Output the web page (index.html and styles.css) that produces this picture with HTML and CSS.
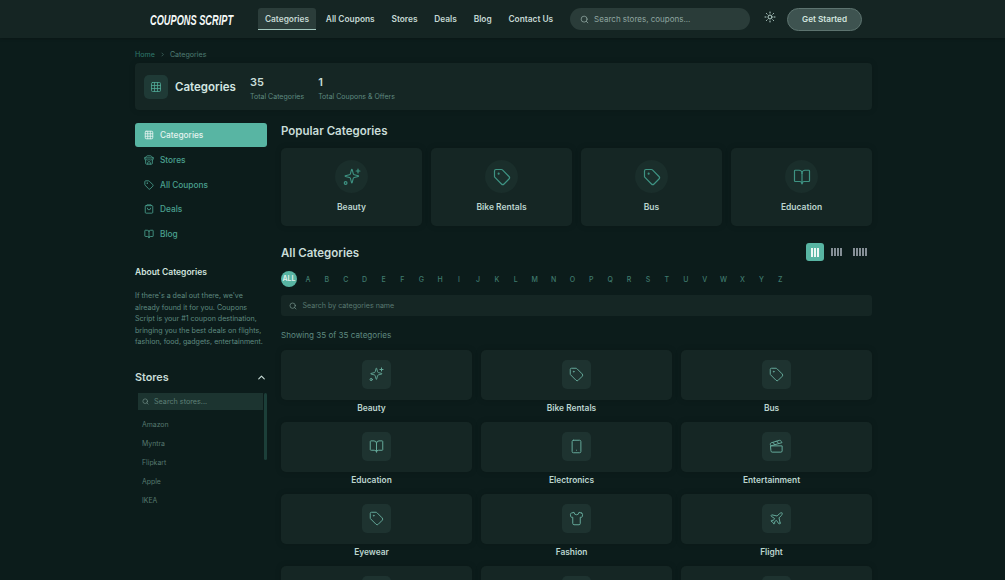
FILE: index.html
```html
<!DOCTYPE html>
<html lang="en">

<head>
    <meta charset="UTF-8">
    <meta name="viewport" content="width=device-width, initial-scale=1.0">
    <title>Categories - Coupons Script</title>
    <link rel="stylesheet" href="styles.css">
</head>

<body>
    <svg class="icon-defs" aria-hidden="true">
        <symbol id="i-grid" viewBox="0 0 24 24"><rect x="3" y="3" width="18" height="18" rx="2"/><path d="M3 9h18M3 15h18M9 3v18M15 3v18"/></symbol>
        <symbol id="i-store" viewBox="0 0 24 24"><path d="m2 7 4.41-4.41A2 2 0 0 1 7.83 2h8.34a2 2 0 0 1 1.42.59L22 7"/><path d="M4 12v8a2 2 0 0 0 2 2h12a2 2 0 0 0 2-2v-8"/><path d="M15 22v-4a2 2 0 0 0-2-2h-2a2 2 0 0 0-2 2v4"/><path d="M2 7h20"/><path d="M22 7v3a2 2 0 0 1-2 2 2.7 2.7 0 0 1-1.59-.63.7.7 0 0 0-.82 0A2.7 2.7 0 0 1 16 12a2.7 2.7 0 0 1-1.59-.63.7.7 0 0 0-.82 0A2.7 2.7 0 0 1 12 12a2.7 2.7 0 0 1-1.59-.63.7.7 0 0 0-.82 0A2.7 2.7 0 0 1 8 12a2.7 2.7 0 0 1-1.59-.63.7.7 0 0 0-.82 0A2.7 2.7 0 0 1 4 12a2 2 0 0 1-2-2V7"/></symbol>
        <symbol id="i-tag" viewBox="0 0 24 24"><path d="M12.586 2.586A2 2 0 0 0 11.172 2H4a2 2 0 0 0-2 2v7.172a2 2 0 0 0 .586 1.414l8.704 8.704a2.426 2.426 0 0 0 3.42 0l6.58-6.58a2.426 2.426 0 0 0 0-3.42z"/><circle cx="7.5" cy="7.5" r=".6"/></symbol>
        <symbol id="i-bag" viewBox="0 0 24 24"><rect x="3" y="4" width="18" height="18" rx="2"/><path d="M6 4l1-2h10l1 2"/><path d="M8 10a4 4 0 0 0 8 0"/></symbol>
        <symbol id="i-book" viewBox="0 0 24 24"><path d="M12 7v14"/><path d="M3 18a1 1 0 0 1-1-1V4a1 1 0 0 1 1-1h5a4 4 0 0 1 4 4 4 4 0 0 1 4-4h5a1 1 0 0 1 1 1v13a1 1 0 0 1-1 1h-6a3 3 0 0 0-3 3 3 3 0 0 0-3-3z"/></symbol>
        <symbol id="i-spark" viewBox="0 0 24 24"><path d="M9.937 15.5A2 2 0 0 0 8.5 14.063l-6.135-1.582a.5.5 0 0 1 0-.962L8.5 9.936A2 2 0 0 0 9.937 8.5l1.582-6.135a.5.5 0 0 1 .963 0L14.063 8.5A2 2 0 0 0 15.5 9.937l6.135 1.581a.5.5 0 0 1 0 .964L15.5 14.063a2 2 0 0 0-1.437 1.437l-1.582 6.135a.5.5 0 0 1-.963 0z" transform="translate(1 0) scale(.9)"/><path d="M20 1.5v5M22.5 4h-5"/><circle cx="3.5" cy="20" r="1.8"/></symbol>
        <symbol id="i-tablet" viewBox="0 0 24 24"><rect x="5" y="2" width="14" height="20" rx="2"/><path d="M12 18h.01"/></symbol>
        <symbol id="i-clap" viewBox="0 0 24 24"><path d="M20.2 6 3 11l-.9-2.4c-.3-1.1.3-2.2 1.3-2.5l13.5-4c1.1-.3 2.2.3 2.5 1.3Z"/><path d="m6.2 5.3 3.1 3.9M12.4 3.4l3.1 4"/><path d="M3 11h18v8a2 2 0 0 1-2 2H5a2 2 0 0 1-2-2Z"/></symbol>
        <symbol id="i-shirt" viewBox="0 0 24 24"><path d="M20.38 3.46 16 2a4 4 0 0 1-8 0L3.62 3.46a2 2 0 0 0-1.34 2.23l.58 3.47a1 1 0 0 0 .99.84H6v10c0 1.1.9 2 2 2h8a2 2 0 0 0 2-2V10h2.15a1 1 0 0 0 .99-.84l.58-3.47a2 2 0 0 0-1.34-2.23z"/></symbol>
        <symbol id="i-plane" viewBox="0 0 24 24"><path d="M17.8 19.2 16 11l3.5-3.5C21 6 21.5 4 21 3c-1-.5-3 0-4.5 1.5L13 8 4.8 6.2c-.5-.1-.9.1-1.1.5l-.3.5c-.2.5-.1 1 .3 1.3L9 12l-2 3H4l-1 1 3 2 2 3 1-1v-3l3-2 3.5 5.3c.3.4.8.5 1.3.3l.5-.2c.4-.3.6-.7.5-1.2z"/></symbol>
        <symbol id="i-search" viewBox="0 0 24 24"><circle cx="11" cy="11" r="8"/><path d="m21 21-4.3-4.3"/></symbol>
    </svg>

    <header class="site-header">
        <div class="logo-box"><a class="logo">COUPONS SCRIPT</a></div>
        <nav class="main-nav">
            <a class="active">Categories</a>
            <a>All Coupons</a>
            <a>Stores</a>
            <a>Deals</a>
            <a>Blog</a>
            <a>Contact Us</a>
        </nav>
        <div class="header-search">
            <svg class="ico"><use href="#i-search"/></svg>
            <span>Search stores, coupons...</span>
        </div>
        <svg class="sun" viewBox="0 0 24 24"><circle cx="12" cy="12" r="4"/><path d="M12 2v2M12 20v2M4.93 4.93l1.41 1.41M17.66 17.66l1.41 1.41M2 12h2M20 12h2M6.34 17.66l-1.41 1.41M19.07 4.93l-1.41 1.41"/></svg>
        <button class="btn-start">Get Started</button>
    </header>

    <div class="page">
        <div class="breadcrumb">
            <span>Home</span>
            <svg class="crumb-sep" viewBox="0 0 24 24"><path d="m9 18 6-6-6-6"/></svg>
            <span class="current">Categories</span>
        </div>

        <section class="hero">
            <div class="hero-icon"><svg class="ico"><use href="#i-grid"/></svg></div>
            <h1>Categories</h1>
            <div class="stat"><strong>35</strong><span>Total Categories</span></div>
            <div class="stat"><strong>1</strong><span>Total Coupons &amp; Offers</span></div>
        </section>

        <div class="columns">
            <aside class="sidebar">
                <ul class="side-menu">
                    <li class="active"><svg class="ico"><use href="#i-grid"/></svg>Categories</li>
                    <li><svg class="ico"><use href="#i-store"/></svg>Stores</li>
                    <li><svg class="ico"><use href="#i-tag"/></svg>All Coupons</li>
                    <li><svg class="ico"><use href="#i-bag"/></svg>Deals</li>
                    <li><svg class="ico"><use href="#i-book"/></svg>Blog</li>
                </ul>

                <h4 class="about-title">About Categories</h4>
                <p class="about-text">If there's a deal out there, we've already found it for you. Coupons Script is your #1 coupon destination, bringing you the best deals on flights, fashion, food, gadgets, entertainment.</p>

                <div class="stores-head">
                    <h3>Stores</h3>
                    <svg class="chev" viewBox="0 0 24 24"><path d="m18 15-6-6-6 6"/></svg>
                </div>
                <div class="stores-box">
                    <div class="stores-scroll"></div>
                    <div class="stores-search">
                        <svg class="ico"><use href="#i-search"/></svg>
                        <span>Search stores...</span>
                    </div>
                    <ul class="stores-list">
                        <li>Amazon</li>
                        <li>Myntra</li>
                        <li>Flipkart</li>
                        <li>Apple</li>
                        <li>IKEA</li>
                    </ul>
                </div>
            </aside>

            <main class="content">
                <h2 class="popular-title">Popular Categories</h2>
                <div class="popular-grid">
                    <div class="pop-card"><div class="pop-icon"><svg class="ico"><use href="#i-spark"/></svg></div><span>Beauty</span></div>
                    <div class="pop-card"><div class="pop-icon"><svg class="ico"><use href="#i-tag"/></svg></div><span>Bike Rentals</span></div>
                    <div class="pop-card"><div class="pop-icon"><svg class="ico"><use href="#i-tag"/></svg></div><span>Bus</span></div>
                    <div class="pop-card"><div class="pop-icon"><svg class="ico"><use href="#i-book"/></svg></div><span>Education</span></div>
                </div>

                <div class="all-head">
                    <h2>All Categories</h2>
                    <div class="view-toggle">
                        <button class="view-btn active"><i></i><i></i><i></i></button>
                        <button class="view-btn"><i></i><i></i><i></i><i></i></button>
                        <button class="view-btn"><i></i><i></i><i></i><i></i><i></i></button>
                    </div>
                </div>

                <div class="alpha">
                    <span class="active">ALL</span><span>A</span><span>B</span><span>C</span><span>D</span><span>E</span><span>F</span><span>G</span><span>H</span><span>I</span><span>J</span><span>K</span><span>L</span><span>M</span><span>N</span><span>O</span><span>P</span><span>Q</span><span>R</span><span>S</span><span>T</span><span>U</span><span>V</span><span>W</span><span>X</span><span>Y</span><span>Z</span>
                </div>

                <div class="cat-search">
                    <svg class="ico"><use href="#i-search"/></svg>
                    <span>Search by categories name</span>
                </div>

                <p class="showing">Showing 35 of 35 categories</p>

                <div class="cat-grid">
                    <div class="cat-item"><div class="cat-card"><div class="cat-icon"><svg class="ico"><use href="#i-spark"/></svg></div></div><span>Beauty</span></div>
                    <div class="cat-item"><div class="cat-card"><div class="cat-icon"><svg class="ico"><use href="#i-tag"/></svg></div></div><span>Bike Rentals</span></div>
                    <div class="cat-item"><div class="cat-card"><div class="cat-icon"><svg class="ico"><use href="#i-tag"/></svg></div></div><span>Bus</span></div>
                    <div class="cat-item"><div class="cat-card"><div class="cat-icon"><svg class="ico"><use href="#i-book"/></svg></div></div><span>Education</span></div>
                    <div class="cat-item"><div class="cat-card"><div class="cat-icon"><svg class="ico"><use href="#i-tablet"/></svg></div></div><span>Electronics</span></div>
                    <div class="cat-item"><div class="cat-card"><div class="cat-icon"><svg class="ico"><use href="#i-clap"/></svg></div></div><span>Entertainment</span></div>
                    <div class="cat-item"><div class="cat-card"><div class="cat-icon"><svg class="ico"><use href="#i-tag"/></svg></div></div><span>Eyewear</span></div>
                    <div class="cat-item"><div class="cat-card"><div class="cat-icon"><svg class="ico"><use href="#i-shirt"/></svg></div></div><span>Fashion</span></div>
                    <div class="cat-item"><div class="cat-card"><div class="cat-icon"><svg class="ico"><use href="#i-plane"/></svg></div></div><span>Flight</span></div>
                    <div class="cat-item"><div class="cat-card"><div class="cat-icon"></div></div></div>
                    <div class="cat-item"><div class="cat-card"><div class="cat-icon"></div></div></div>
                    <div class="cat-item"><div class="cat-card"><div class="cat-icon"></div></div></div>
                </div>
            </main>
        </div>
    </div>
</body>

</html>
```

FILE: styles.css
```css
* {
    box-sizing: border-box;
}

html,
body {
    height: 100%;
}

body {
    margin: 0;
    overflow: hidden;
    background-color: #0c1c1b;
    color: #c4dad4;
    font-family: Inter, "Liberation Sans", sans-serif;
}

h1,
h2,
h3,
h4,
p,
ul {
    margin: 0;
    padding: 0;
}

ul {
    list-style: none;
}

button {
    font-family: inherit;
    border: none;
}

.icon-defs {
    position: absolute;
    width: 0;
    height: 0;
}

.ico {
    fill: none;
    stroke: currentColor;
    stroke-width: 2;
    stroke-linecap: round;
    stroke-linejoin: round;
    flex-shrink: 0;
}

/* Header */
.site-header {
    height: 38px;
    display: flex;
    align-items: center;
    padding-left: 150px;
    background-color: #152523;
    box-shadow: 0 1px 3px rgba(0, 0, 0, 0.2);
}

.logo-box {
    width: 107.5px;
    flex-shrink: 0;
}

/* no condensed face installed, so squeeze the bold italic */
.logo {
    display: block;
    white-space: nowrap;
    font-family: "Liberation Sans", sans-serif;
    font-size: 15px;
    font-weight: 700;
    font-style: italic;
    color: #f4f8f7;
    transform: scaleX(0.615);
    transform-origin: left center;
}

.main-nav {
    display: flex;
    gap: 2px;
}

.main-nav a {
    height: 22px;
    padding: 0 7.4px;
    display: flex;
    align-items: center;
    font-size: 8.35px;
    font-weight: 600;
    color: #c4d8d3;
    border-radius: 3px 3px 0 0;
}

.main-nav a.active {
    background-color: #2b3d3a;
    border-bottom: 1.5px solid #a4c8bf;
}

.header-search {
    width: 180px;
    height: 22px;
    margin-left: 9.5px;
    padding-left: 10px;
    display: flex;
    align-items: center;
    gap: 5px;
    background-color: #2a3c39;
    border-radius: 11px;
    font-size: 8px;
    color: #8fa6a0;
}

.header-search .ico {
    width: 9px;
    height: 9px;
    color: #93aaa4;
}

.sun {
    width: 12px;
    height: 12px;
    margin: -5px 0 0 14px;
    fill: none;
    stroke: #b9d4cd;
    stroke-width: 2;
    stroke-linecap: round;
}

.btn-start {
    width: 75px;
    height: 23px;
    margin-left: 11px;
    background-color: #3e5350;
    border: 1px solid #5d736f;
    border-radius: 12px;
    color: #d2e4df;
    font-size: 8.2px;
    font-weight: 600;
}

/* Page */
.page {
    width: 737px;
    margin-left: 135px;
}

.breadcrumb {
    height: 25px;
    padding-top: 7px;
    display: flex;
    align-items: center;
    gap: 3px;
    font-size: 7.1px;
    color: #2f7a6c;
}

.breadcrumb .current {
    color: #4f7d73;
}

.crumb-sep {
    width: 7px;
    height: 7px;
    margin: 0 1px;
    fill: none;
    stroke: #4f7d73;
    stroke-width: 2;
}

.hero {
    height: 47px;
    display: flex;
    align-items: center;
    padding-left: 9px;
    background-color: #152624;
    border-radius: 4px;
    box-shadow: 0 0 6px rgba(0, 0, 0, 0.15);
}

.hero-icon {
    width: 24px;
    height: 24px;
    display: flex;
    align-items: center;
    justify-content: center;
    background-color: #1f3a36;
    border-radius: 5px;
    color: #4fa796;
}

.hero-icon .ico {
    width: 12px;
    height: 12px;
    stroke-width: 1.6;
}

.hero h1 {
    width: 61px;
    margin-left: 7px;
    font-size: 11.5px;
    font-weight: 600;
    color: #d3e6e1;
}

.stat {
    margin-left: 14px;
    padding-top: 2px;
    display: flex;
    flex-direction: column;
    gap: 3px;
}

.stat strong {
    font-size: 11px;
    font-weight: 600;
    color: #c9ddd8;
}

.stat span {
    font-size: 7px;
    color: #5f8a80;
}

.columns {
    display: flex;
    gap: 14px;
    margin-top: 13px;
}

/* Sidebar */
.sidebar {
    width: 132px;
    flex-shrink: 0;
}

.side-menu li {
    height: 24px;
    margin-bottom: 0.8px;
    padding-left: 9px;
    display: flex;
    align-items: center;
    gap: 6px;
    font-size: 8.3px;
    font-weight: 500;
    color: #4aa08f;
    border-radius: 3px;
}

.side-menu li .ico {
    width: 10px;
    height: 10px;
}

.side-menu li.active {
    background-color: #58b5a3;
    color: #e4f3ef;
}

.about-title {
    margin-top: 21px;
    font-size: 8.5px;
    font-weight: 600;
    color: #d0e2dd;
}

.about-text {
    margin-top: 13px;
    font-size: 7.1px;
    line-height: 11.5px;
    color: #5f8a80;
}

.stores-head {
    margin-top: 23px;
    display: flex;
    align-items: center;
    justify-content: space-between;
}

.stores-head h3 {
    font-size: 10.8px;
    font-weight: 600;
    color: #c9ddd8;
}

.chev {
    width: 11px;
    height: 11px;
    fill: none;
    stroke: #c9ddd8;
    stroke-width: 2.5;
    stroke-linecap: round;
    stroke-linejoin: round;
}

.stores-box {
    position: relative;
    margin-top: 9px;
    padding: 0 4px 0 3px;
}

.stores-scroll {
    position: absolute;
    top: 0;
    right: 0;
    width: 3.5px;
    height: 67px;
    background-color: #1c3f39;
    border-radius: 2px;
}

.stores-search {
    height: 17px;
    padding-left: 4px;
    display: flex;
    align-items: center;
    gap: 5px;
    background-color: #1c3430;
    font-size: 7.2px;
    color: #5f8077;
}

.stores-search .ico {
    width: 7px;
    height: 7px;
    color: #7c9a92;
}

.stores-list {
    margin-top: 5px;
    padding-left: 4px;
}

.stores-list li {
    height: 19px;
    display: flex;
    align-items: center;
    font-size: 6.9px;
    color: #56796f;
}

/* Main column */
.content {
    width: 591px;
}

.popular-title {
    height: 16px;
    font-size: 11.5px;
    line-height: 16px;
    font-weight: 600;
    color: #c9ddd8;
}

.popular-grid {
    margin-top: 9px;
    display: grid;
    grid-template-columns: repeat(4, 1fr);
    gap: 9px;
}

.pop-card {
    height: 78px;
    padding-top: 12px;
    display: flex;
    flex-direction: column;
    align-items: center;
    background-color: #152624;
    border-radius: 5px;
    box-shadow: 0 0 6px rgba(0, 0, 0, 0.15);
    font-size: 8.5px;
    font-weight: 600;
    color: #bcd5cf;
}

.pop-icon {
    width: 33px;
    height: 33px;
    margin-bottom: 9px;
    display: flex;
    align-items: center;
    justify-content: center;
    background-color: #1a2e2b;
    border-radius: 50%;
    color: #3e9383;
}

.pop-icon .ico {
    width: 18px;
    height: 18px;
    stroke-width: 1.6;
}

.all-head {
    margin-top: 16px;
    height: 20px;
    display: flex;
    align-items: center;
    justify-content: space-between;
}

.all-head h2 {
    padding-top: 2px;
    font-size: 11.5px;
    font-weight: 600;
    color: #c9ddd8;
}

.view-toggle {
    display: flex;
}

.view-btn {
    width: 24px;
    height: 18px;
    padding: 0;
    display: flex;
    align-items: center;
    justify-content: center;
    gap: 1px;
    background: none;
    border-radius: 3px;
}

.view-btn i {
    width: 2px;
    height: 8px;
    background-color: #858f96;
}

.view-btn.active {
    width: 18px;
    background-color: #58b5a3;
    gap: 1px;
}

.view-btn.active i {
    width: 2px;
    height: 9px;
    background-color: #eef8f5;
}

.alpha {
    margin-top: 9px;
    display: flex;
    align-items: center;
}

.alpha span {
    width: 18.9px;
    text-align: center;
    font-size: 7px;
    font-weight: 500;
    color: #3f7a6d;
}

.alpha span.active {
    width: 16px;
    height: 16px;
    margin-right: 1.5px;
    line-height: 16px;
    border-radius: 50%;
    background-color: #58b5a3;
    color: #e4f3ef;
    font-weight: 600;
}

.cat-search {
    height: 21px;
    margin-top: 8px;
    padding-left: 7.5px;
    display: flex;
    align-items: center;
    gap: 6px;
    background-color: #152624;
    border-radius: 3px;
    font-size: 7.1px;
    color: #5a7a72;
}

.cat-search .ico {
    width: 8px;
    height: 8px;
    color: #7c9a92;
}

.showing {
    margin-top: 13.5px;
    font-size: 8.1px;
    line-height: 11px;
    color: #5f8a80;
}

.cat-grid {
    margin-top: 9px;
    display: grid;
    grid-template-columns: repeat(3, 1fr);
    column-gap: 9px;
    row-gap: 7px;
}

.cat-item {
    height: 65px;
    font-size: 8.4px;
    font-weight: 600;
    color: #bcd5cf;
    text-align: center;
}

/* label sits a bit left of the card centre */
.cat-item span {
    display: block;
    margin-top: 3px;
    padding-right: 10px;
}

.cat-card {
    height: 50px;
    padding-top: 10px;
    display: flex;
    justify-content: center;
    background-color: #152624;
    border-radius: 5px;
    box-shadow: 0 0 6px rgba(0, 0, 0, 0.15);
}

.cat-icon {
    width: 29px;
    height: 29px;
    display: flex;
    align-items: center;
    justify-content: center;
    background-color: #1e3330;
    border-radius: 5px;
    color: #64a899;
}

.cat-icon .ico {
    width: 15px;
    height: 15px;
    stroke-width: 1.6;
}
```
